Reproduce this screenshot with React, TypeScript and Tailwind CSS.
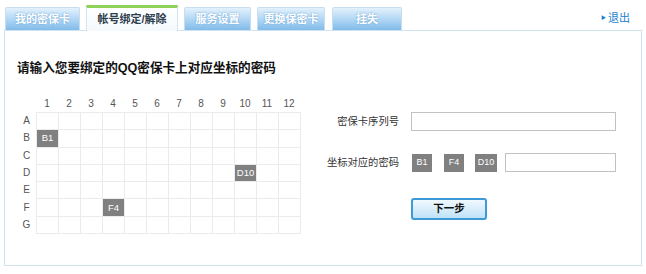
import React from 'react';

const cols = ['1', '2', '3', '4', '5', '6', '7', '8', '9', '10', '11', '12'];
const rows = ['A', 'B', 'C', 'D', 'E', 'F', 'G'];

// coordinates shown on the card: row letter + column index
const marked: Record<string, string> = { B1: 'B1', D10: 'D10', F4: 'F4' };

const font = { fontFamily: '"Liberation Sans", "Noto Sans CJK SC", sans-serif' };

function Tab({ label, width, active }: { label: string; width: string; active?: boolean }) {
  if (active) {
    return (
      <div
        className={`${width} h-[26px] -mb-px relative z-10 flex items-center justify-center border-x border-[#d3e3ef] border-t-[3px] border-t-[#8fd25a] bg-gradient-to-b from-[#ffffff] to-[#f4f9fd] text-[11px] font-bold text-[#2e3d4c]`}
      >
        {label}
      </div>
    );
  }
  return (
    <div
      className={`${width} h-[23px] flex items-center justify-center rounded-t-[2px] border border-b-0 border-[#c7def1] bg-gradient-to-b from-[#e3f1fc] via-[#b3d7f4] to-[#80bbea] text-[11px] font-bold text-white [text-shadow:0_0_2px_#5f9fd4]`}
    >
      {label}
    </div>
  );
}

function CoordBox({ text, width }: { text: string; width: string }) {
  return (
    <div className={`${width} h-[18px] flex items-center justify-center bg-[#808080] text-[9px] text-white`}>
      {text}
    </div>
  );
}

export default function App() {
  return (
    <div className="w-[646px] h-[274px] bg-white relative" style={font}>
      <div className="flex items-end h-[30px] pl-[5px] pr-[16px]">
        <div className="flex items-end gap-[6px]">
          <Tab label="我的密保卡" width="w-[75px]" />
          <Tab label="帐号绑定/解除" width="w-[92px]" active />
          <Tab label="服务设置" width="w-[67px]" />
          <Tab label="更换保密卡" width="w-[68px]" />
          <div className="pl-px">
            <Tab label="挂失" width="w-[70px]" />
          </div>
        </div>
        <div className="ml-auto self-center mt-[6px] flex items-center gap-[2px] text-[11px] text-[#1d7fcc]">
          <span className="text-[5px]">▶</span>
          <span>退出</span>
        </div>
      </div>

      <div className="ml-[4px] w-[638px] h-[236px] border border-[#cfe2f0] pt-[29px]">
        <h1 className="pl-[12px] text-[12.6px] leading-[16px] font-bold text-[#111]">
          请输入您要绑定的QQ密保卡上对应坐标的密码
        </h1>

        <div className="flex mt-[19px]">
          <div className="pl-[12px]">
            <div className="flex h-[17px] items-center text-[10px] text-[#555]">
              <div className="w-[19px]" />
              {cols.map((c) => (
                <div key={c} className="w-[22px] text-center">
                  {c}
                </div>
              ))}
            </div>
            <div className="flex">
              <div className="w-[19px]">
                {rows.map((r) => (
                  <div key={r} className="h-[17.3px] flex items-center justify-center text-[10px] text-[#555]">
                    {r}
                  </div>
                ))}
              </div>
              <div className="border-l border-t border-[#ebebeb]">
                {rows.map((r) => (
                  <div key={r} className="flex">
                    {cols.map((c) => {
                      const key = r + c;
                      return (
                        <div
                          key={key}
                          className="w-[22px] h-[17.3px] border-r border-b border-[#ebebeb] flex"
                        >
                          {marked[key] && (
                            <div className="flex-1 flex items-center justify-center bg-[#808080] text-[9.5px] text-white">
                              {marked[key]}
                            </div>
                          )}
                        </div>
                      );
                    })}
                  </div>
                ))}
              </div>
            </div>
          </div>

          <div className="ml-[18px] pt-[17px] text-[10.3px] text-[#333]">
            <div className="flex items-center">
              <div className="w-[80px] text-right whitespace-nowrap">密保卡序列号</div>
              <div className="ml-[12px] w-[205px] h-[19px] border border-[#c2c2c2] bg-white" />
            </div>
            <div className="flex items-center mt-[22px]">
              <div className="w-[80px] text-right whitespace-nowrap">坐标对应的密码</div>
              <div className="ml-[13px] flex items-center">
                <CoordBox text="B1" width="w-[20px]" />
                <div className="ml-[12px]">
                  <CoordBox text="F4" width="w-[20px]" />
                </div>
                <div className="ml-[11px]">
                  <CoordBox text="D10" width="w-[22px]" />
                </div>
              </div>
              <div className="ml-[8px] w-[111px] h-[19px] border border-[#c2c2c2] bg-white" />
            </div>
            <div className="mt-[26px] pl-[92px]">
              <button
                type="button"
                className="w-[76px] h-[22px] rounded-[3px] border-2 border-[#3d9ad6] bg-gradient-to-b from-[#f1f9fe] to-[#bfe2f7] text-[10.5px] font-bold text-[#111]"
              >
                下一步
              </button>
            </div>
          </div>
        </div>
      </div>
    </div>
  );
}
